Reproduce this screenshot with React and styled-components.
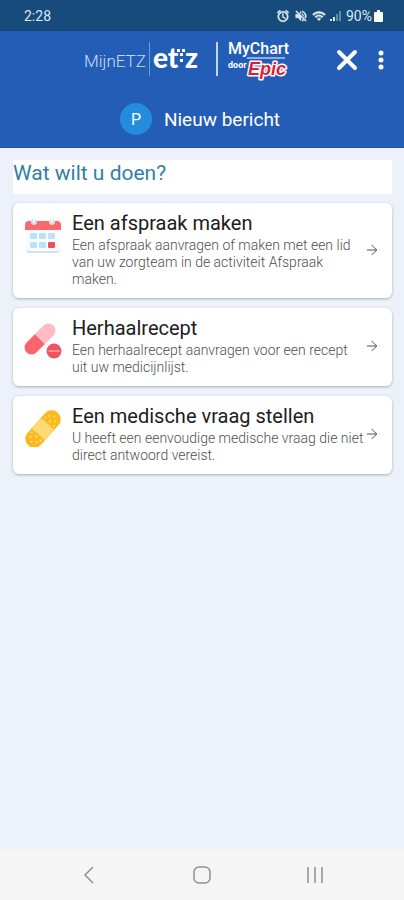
import styled, { createGlobalStyle } from "styled-components";
import { ArrowRight } from "lucide-react";
import { MdAlarm, MdVolumeOff, MdWifi } from "react-icons/md";

const GlobalStyle = createGlobalStyle`
  * {
    box-sizing: border-box;
  }
  body {
    margin: 0;
    font-family: Roboto, "Liberation Sans", sans-serif;
    background-color: #edf1fa;
  }
  h1, h2, p {
    margin: 0;
    font-weight: 400;
  }
`;

const Screen = styled.div`
  display: flex;
  flex-direction: column;
  min-height: 100vh;
`;

// Status bar
const StatusBar = styled.div`
  display: flex;
  align-items: center;
  justify-content: space-between;
  height: 31px;
  padding: 0 21px 0 24px;
  background-color: #164b7c;
  color: #dce8f2;
  font-size: 14px;
`;

const StatusIcons = styled.div`
  display: flex;
  align-items: center;
  gap: 4px;
  > svg path:not([fill="none"]) {
    stroke: currentColor;
    stroke-width: 1px;
  }
`;

const Signal = styled.span`
  display: flex;
`;

const Percent = styled.span`
  display: flex;
  align-items: center;
  gap: 2px;
`;

// Header
const Header = styled.header`
  height: 117px;
  background-color: #245db5;
  color: white;
  border-bottom: 1px solid #1c55a8;
`;

const Brand = styled.div`
  display: flex;
  align-items: center;
  justify-content: flex-end;
  height: 58px;
  padding-right: 9px;
`;

const Logo = styled.svg`
  flex: none;
  margin-right: 38px;
`;

const IconButton = styled.button`
  display: flex;
  align-items: center;
  justify-content: center;
  width: ${(props) => props.$width};
  height: 32px;
  padding: 0;
  border: 0;
  background: none;
  color: inherit;
`;

const Subject = styled.div`
  display: flex;
  align-items: center;
  justify-content: center;
  gap: 12px;
  height: 60px;
  padding-right: 4px;
`;

const Avatar = styled.span`
  display: flex;
  align-items: center;
  justify-content: center;
  width: 32px;
  height: 32px;
  border-radius: 50%;
  background-color: #238cdb;
  font-size: 16px;
`;

const PageTitle = styled.h1`
  font-size: 19px;
`;

// Content
const Content = styled.main`
  flex: 1;
  padding: 12px 12px 24px 13px;
`;

const Question = styled.h2`
  height: 34px;
  margin-bottom: 9px;
  background-color: white;
  color: #317fa5;
  font-size: 21px;
  line-height: 26px;
`;

const Cards = styled.div`
  display: flex;
  flex-direction: column;
  gap: 10px;
`;

const Card = styled.a`
  display: flex;
  align-items: center;
  padding: 8px 12px 10px 11px;
  border-radius: 6px;
  background-color: white;
  box-shadow: 0 1px 3px rgba(60, 75, 95, 0.4);
  color: #505050;
  text-decoration: none;
`;

const Picture = styled.svg`
  flex: none;
  align-self: flex-start;
  margin: 5px 10px 0 0;
`;

const CardText = styled.div`
  flex: 1;
`;

const CardTitle = styled.h2`
  margin-bottom: 2px;
  color: #202020;
  font-size: 20px;
  line-height: 24px;
`;

const CardInfo = styled.p`
  font-size: 14px;
  font-weight: 300;
  line-height: 17px;
`;

// Bottom navigation
const NavBar = styled.nav`
  display: flex;
  align-items: center;
  justify-content: space-around;
  height: 50px;
  padding: 0 32px;
  background-color: #f5f5f5;
  color: #909090;
`;

function Calendar() {
  return (
    <Picture width="38" height="38" viewBox="0 0 38 38" aria-hidden="true">
      <rect x="2" y="7" width="34" height="30" rx="4" fill="#d9dfe6" />
      <rect x="2" y="6" width="34" height="29" rx="3" fill="#fbfbfd" />
      <path d="M1 14V9q0-4 4-4h28q4 0 4 4v5z" fill="#f96a6c" />
      <g fill="#d5dbe4">
        <circle cx="10" cy="6" r="3" />
        <circle cx="28" cy="6" r="3" />
      </g>
      <g fill="#f5f6fa">
        <rect x="9" y="2" width="2" height="5" rx="1" />
        <rect x="27" y="2" width="2" height="5" rx="1" />
      </g>
      <g fill="#b9e4f7">
        <rect x="6" y="17" width="7" height="6" rx="1" />
        <rect x="15" y="17" width="7" height="6" rx="1" />
        <rect x="24" y="17" width="7" height="6" rx="1" />
        <rect x="6" y="26" width="7" height="6" rx="1" />
        <rect x="15" y="26" width="7" height="6" rx="1" />
      </g>
      <rect x="24" y="26" width="7" height="6" rx="1" fill="#ef4e5c" />
    </Picture>
  );
}

function Pills() {
  return (
    <Picture width="38" height="38" viewBox="0 0 38 38" aria-hidden="true">
      <g transform="rotate(-45 16 18)">
        <path d="M16 11H4a7 7 0 0 0 0 14h12z" fill="#f8666c" />
        <path d="M16 11h12a7 7 0 0 1 0 14H16z" fill="#fdbcc4" />
      </g>
      <circle cx="30" cy="30" r="7.500" fill="#ee5560" />
      <path d="M24.500 30h11" stroke="#f9a9ad" strokeWidth="1.500" />
    </Picture>
  );
}

function Plaster() {
  return (
    <Picture width="38" height="38" viewBox="0 0 38 38" aria-hidden="true">
      <g transform="rotate(-48 19 20)">
        <rect x="-3" y="11" width="44" height="18" rx="9" fill="#fbb91b" />
        <rect x="12" y="11" width="14" height="18" fill="#ffd976" />
        <g fill="#ffe39a">
          <circle cx="2" cy="20" r="1" />
          <circle cx="5" cy="16" r="1" />
          <circle cx="5" cy="24" r="1" />
          <circle cx="9" cy="20" r="1" />
          <circle cx="9" cy="14" r="1" />
          <circle cx="9" cy="26" r="1" />
          <circle cx="29" cy="20" r="1" />
          <circle cx="29" cy="14" r="1" />
          <circle cx="29" cy="26" r="1" />
          <circle cx="33" cy="16" r="1" />
          <circle cx="33" cy="24" r="1" />
          <circle cx="36" cy="20" r="1" />
        </g>
      </g>
    </Picture>
  );
}

function BrandLogo() {
  return (
    <Logo width="206" height="44" viewBox="0 0 206 44" role="img" aria-label="MijnETZ, MyChart door Epic">
      <text x="1" y="29" fill="#c8dcf5" fontSize="17" fontWeight="300">MijnETZ</text>
      <path d="M66.500 4v34" stroke="#6f9bd6" />
      <g fill="white" fontFamily="Lato" fontSize="28" fontWeight="900">
        <text x="70" y="30">et</text>
        <text x="102" y="30">z</text>
      </g>
      <g fill="white">
        <rect x="94" y="11" width="3" height="3" />
        <rect x="99" y="11" width="3" height="3" />
        <rect x="97" y="15" width="3" height="3" />
        <rect x="97" y="21" width="3" height="3" />
      </g>
      <path d="M134 4v34" stroke="#c3d5ee" strokeWidth="2" />
      <text x="145" y="16" fill="white" fontSize="16" fontWeight="500">MyChart</text>
      <path d="M164 20h38" stroke="white" strokeWidth="1" />
      <text x="145" y="30" fill="white" fontSize="9" fontWeight="700">door</text>
      <text
        x="165"
        y="37"
        fill="#df1d35"
        stroke="white"
        strokeWidth="3"
        strokeLinejoin="round"
        paintOrder="stroke"
        fontFamily="Liberation Sans"
        fontSize="18"
        fontWeight="700"
        fontStyle="italic"
      >
        Epic
      </text>
    </Logo>
  );
}

const actions = [
  {
    title: "Een afspraak maken",
    info: "Een afspraak aanvragen of maken met een lid van uw zorgteam in de activiteit Afspraak maken.",
    Icon: Calendar,
  },
  {
    title: "Herhaalrecept",
    info: "Een herhaalrecept aanvragen voor een recept uit uw medicijnlijst.",
    Icon: Pills,
  },
  {
    title: "Een medische vraag stellen",
    info: "U heeft een eenvoudige medische vraag die niet direct antwoord vereist.",
    Icon: Plaster,
  },
];

export default function App() {
  return (
    <Screen>
      <GlobalStyle />
      <StatusBar>
        <span>2:28</span>
        <StatusIcons>
          <MdAlarm size={14} />
          <MdVolumeOff size={14} />
          <MdWifi size={14} />
          <Signal>
            <svg width="12" height="12" viewBox="0 0 12 12" fill="currentColor">
              <path d="M0 11h2V9H0zM3 11h2V7H3z" />
              <path d="M6 11h2V4H6zM9 11h2V1H9z" opacity="0.4" />
            </svg>
          </Signal>
          <Percent>
            90%
            <svg width="9" height="12" viewBox="0 0 9 12" fill="white">
              <path d="M3 0h3v2h2q1 0 1 1v8q0 1-1 1H1q-1 0-1-1V3q0-1 1-1h2z" />
            </svg>
          </Percent>
        </StatusIcons>
      </StatusBar>
      <Header>
        <Brand>
          <BrandLogo />
          <IconButton $width="40px" aria-label="Sluiten">
            <svg width="22" height="22" viewBox="0 0 22 22">
              <path d="M3 3l16 16M19 3L3 19" stroke="white" strokeWidth="4" strokeLinecap="round" />
            </svg>
          </IconButton>
          <IconButton $width="28px" aria-label="Meer opties">
            <svg width="6" height="20" viewBox="0 0 6 20" fill="white">
              <circle cx="3" cy="3" r="2.500" />
              <circle cx="3" cy="10" r="2.500" />
              <circle cx="3" cy="17" r="2.500" />
            </svg>
          </IconButton>
        </Brand>
        <Subject>
          <Avatar>P</Avatar>
          <PageTitle>Nieuw bericht</PageTitle>
        </Subject>
      </Header>
      <Content>
        <Question>Wat wilt u doen?</Question>
        <Cards>
          {actions.map(({ title, info, Icon }) => (
            <Card href="#" key={title}>
              <Icon />
              <CardText>
                <CardTitle>{title}</CardTitle>
                <CardInfo>{info}</CardInfo>
              </CardText>
              <ArrowRight size={16} strokeWidth={1.5} />
            </Card>
          ))}
        </Cards>
      </Content>
      <NavBar>
        <IconButton $width="32px" aria-label="Terug">
          <svg width="18" height="18" viewBox="0 0 18 18" fill="none" stroke="currentColor" strokeWidth="1.500">
            <path d="M13 1L5 9l8 8" />
          </svg>
        </IconButton>
        <IconButton $width="32px" aria-label="Startscherm">
          <svg width="18" height="18" viewBox="0 0 18 18" fill="none" stroke="currentColor" strokeWidth="1.500">
            <rect x="1" y="1" width="16" height="16" rx="5" />
          </svg>
        </IconButton>
        <IconButton $width="32px" aria-label="Recente apps">
          <svg width="18" height="18" viewBox="0 0 18 18" stroke="currentColor" strokeWidth="1.500">
            <path d="M2 1v16M9 1v16M16 1v16" />
          </svg>
        </IconButton>
      </NavBar>
    </Screen>
  );
}
